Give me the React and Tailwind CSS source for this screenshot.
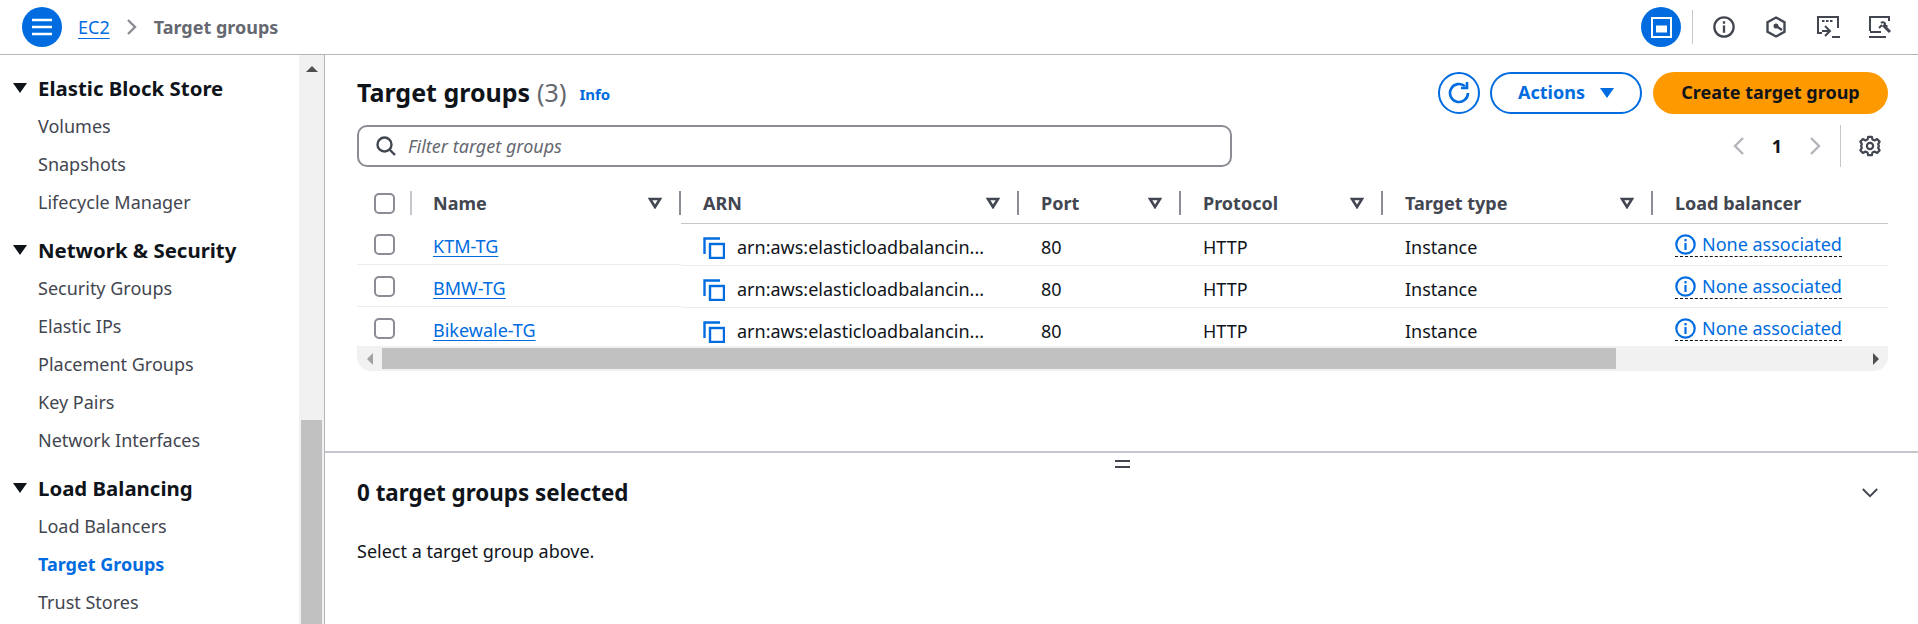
import React from 'react';

function Hamburger() {
  return (
    <svg viewBox="0 0 20 20" className="w-5 h-5" fill="none" stroke="white" strokeWidth="2.4">
      <path d="M0 3h20M0 10h20M0 17h20" />
    </svg>
  );
}

function Sep({ className = 'bg-[#8c8c94]' }) {
  return <div className={`w-[2px] h-[24px] shrink-0 ${className}`}></div>;
}

function SortIcon() {
  return (
    <svg viewBox="0 0 14 12" className="w-[14px] h-[12px] shrink-0" fill="none" stroke="#424650" strokeWidth="2.6">
      <path d="M2 2h10L7 10z" />
    </svg>
  );
}

function InfoIcon({ color, size = 'w-[21px] h-[21px]' }) {
  return (
    <svg viewBox="0 0 21 21" className={`${size} shrink-0`} fill="none" stroke={color} strokeWidth="2.2">
      <circle cx="10.5" cy="10.5" r="9.2" />
      <path d="M10.5 9v7" />
      <path d="M10.5 5v2.4" />
    </svg>
  );
}

function CopyIcon() {
  return (
    <svg viewBox="0 0 22 22" className="w-[22px] h-[22px] shrink-0" fill="none" stroke="#006ce0" strokeWidth="2.4">
      <path d="M1.5 17V1.5H17" />
      <rect x="7" y="7" width="14" height="14" />
    </svg>
  );
}

function Checkbox({ className = '' }) {
  return <div className={`w-[21px] h-[21px] rounded-[5px] border-[2px] border-[#8c8c94] bg-white shrink-0 ${className}`}></div>;
}

function NavGroup({ title, items, active }) {
  return (
    <div className="mb-[10px]">
      <div className="flex items-center h-[38px]">
        <svg viewBox="0 0 14 12" className="w-[14px] h-[12px] ml-[13px] mr-[11px]" fill="#0f141a">
          <path d="M0 1h14L7 11z" />
        </svg>
        <span className="text-[20.4px] font-bold text-[#0f141a]">{title}</span>
      </div>
      {items.map((item) => (
        <div
          key={item}
          className={`h-[38px] flex items-center pl-[38px] text-[18px] ${item === active ? 'font-bold text-[#006ce0]' : 'text-[#424650]'}`}
        >
          {item}
        </div>
      ))}
    </div>
  );
}

function Sidebar() {
  return (
    <div className="w-[325px] shrink-0 flex border-r border-[#b4b4bb] overflow-hidden">
      <div className="flex-1 pt-[14px] overflow-hidden">
        <NavGroup title="Elastic Block Store" items={['Volumes', 'Snapshots', 'Lifecycle Manager']} />
        <NavGroup title="Network & Security" items={['Security Groups', 'Elastic IPs', 'Placement Groups', 'Key Pairs', 'Network Interfaces']} />
        <NavGroup title="Load Balancing" items={['Load Balancers', 'Target Groups', 'Trust Stores']} active="Target Groups" />
      </div>
      <div className="w-[25px] bg-[#f1f1f1] flex flex-col items-center">
        <svg viewBox="0 0 12 6" className="w-[12px] h-[6px] mt-[11px]" fill="#505050">
          <path d="M6 0l6 6H0z" />
        </svg>
        <div className="flex-1"></div>
        <div className="w-[21px] h-[204px] bg-[#c1c1c1]"></div>
      </div>
    </div>
  );
}

const rows = ['KTM-TG', 'BMW-TG', 'Bikewale-TG'];

function HeadCell({ label, width, sort = true }) {
  return (
    <div className={`flex items-center h-[34px] shrink-0 ${width}`}>
      <span className="pl-[22px] text-[18px] font-bold text-[#424650]">{label}</span>
      <div className="flex-1"></div>
      {sort && <SortIcon />}
      {sort && <div className="w-[17px]"></div>}
      {sort && <Sep />}
    </div>
  );
}

function TargetTable() {
  return (
    <div className="w-[1531px] overflow-hidden">
      <div className="flex h-[37px] pb-[3px]">
        <div className="w-[324px] shrink-0 flex items-center">
          <div className="w-[17px]"></div>
          <Checkbox />
          <div className="w-[15px]"></div>
          <Sep className="bg-[#c6c6cd]" />
          <span className="pl-[21px] text-[18px] font-bold text-[#424650] flex-1">Name</span>
          <SortIcon />
          <div className="w-[17px]"></div>
          <Sep />
        </div>
        <HeadCell label="ARN" width="w-[338px]" />
        <HeadCell label="Port" width="w-[162px]" />
        <HeadCell label="Protocol" width="w-[202px]" />
        <HeadCell label="Target type" width="w-[270px]" />
        <HeadCell label="Load balancer" width="flex-1" sort={false} />
      </div>
      {/* third row is cut by the horizontal scrollbar */}
      <div className="h-[123px] overflow-hidden">
        {rows.map((name, i) => (
          <div key={name} className="flex h-[42px]">
            <div className="w-[324px] shrink-0 flex items-center border-b-[1px] border-[#ebebf0]">
              <div className="w-[17px]"></div>
              <Checkbox className="mt-[2px]" />
              <div className="w-[38px]"></div>
              <span className="mt-[5px] text-[18px] leading-[22px] text-[#006ce0] underline underline-offset-[3px] decoration-1">{name}</span>
            </div>
            <div className={`flex-1 flex items-center pt-[6px] border-t-[1px] ${i === 0 ? 'border-[#c6c6cd]' : 'border-[#ebebf0]'}`}>
              <div className="w-[338px] shrink-0 flex items-center pl-[22px] text-[18px] text-[#0f141a]">
                <CopyIcon />
                <span className="ml-[12px] whitespace-nowrap">arn:aws:elasticloadbalancin...</span>
              </div>
              <div className="w-[162px] shrink-0 pl-[22px] text-[18px] text-[#0f141a]">80</div>
              <div className="w-[202px] shrink-0 pl-[22px] text-[18px] text-[#0f141a]">HTTP</div>
              <div className="w-[270px] shrink-0 pl-[22px] text-[18px] text-[#0f141a]">Instance</div>
              <div className="flex-1 pl-[22px]">
                <span className="inline-flex items-center gap-[6px] -mt-[2px] text-[18px] leading-[24px] text-[#006ce0] border-b-[1px] border-dashed border-[#0f141a]">
                  <InfoIcon color="#006ce0" />
                  None associated
                </span>
              </div>
            </div>
          </div>
        ))}
      </div>
      <div className="h-[25px] bg-[#f1f1f1] rounded-b-[14px] flex items-center">
        <div className="w-[25px] flex justify-center">
          <svg viewBox="0 0 6 12" className="w-[6px] h-[12px]" fill="#a3a3a3">
            <path d="M0 6l6-6v12z" />
          </svg>
        </div>
        <div className="w-[1234px] h-[21px] bg-[#c1c1c1]"></div>
        <div className="flex-1"></div>
        <div className="w-[25px] flex justify-center">
          <svg viewBox="0 0 6 12" className="w-[6px] h-[12px]" fill="#505050">
            <path d="M6 6L0 0v12z" />
          </svg>
        </div>
      </div>
    </div>
  );
}

export default function App() {
  return (
    <div className="w-[1918px] h-[624px] overflow-hidden bg-white flex flex-col font-['Noto_Sans',sans-serif]">
      {/* Top bar */}
      <div className="h-[55px] shrink-0 border-b border-[#b4b4bb] flex items-center pl-[22px] pr-[26px]">
        <div className="w-10 h-10 rounded-full bg-[#006ce0] flex items-center justify-center">
          <Hamburger />
        </div>
        <span className="ml-[16px] text-[18px] text-[#006ce0] underline underline-offset-[4px] decoration-1">EC2</span>
        <svg viewBox="0 0 12 16" className="w-[12px] h-[16px] ml-[16px]" fill="none" stroke="#8c8c94" strokeWidth="2.4">
          <path d="M2 1l7 7-7 7" />
        </svg>
        <span className="ml-[16px] text-[18px] font-bold text-[#656871]">Target groups</span>
        <div className="flex-1"></div>
        <div className="w-10 h-10 rounded-full bg-[#006ce0] flex items-center justify-center">
          <svg viewBox="0 0 21 21" className="w-[21px] h-[21px]" fill="none" stroke="white" strokeWidth="2">
            <rect x="1" y="1" width="19" height="19" />
            <rect x="5" y="8.5" width="11" height="7" fill="white" stroke="none" />
          </svg>
        </div>
        <div className="w-[1px] h-[34px] bg-[#c6c6cd] ml-[11px] mr-[20px]"></div>
        <InfoIcon color="#424650" size="w-[22px] h-[22px]" />
        <svg viewBox="0 0 22 22" className="w-[22px] h-[22px] ml-[30px]" fill="none" stroke="#424650" strokeWidth="2.4">
          <path d="M11 1.500l8.500 4.700v9.600L11 20.500l-8.500-4.700V6.200z" />
          <circle cx="11" cy="10" r="2.500" fill="#424650" stroke="none" />
          <path d="M11 10l6 4" />
        </svg>
        <svg viewBox="0 0 24 24" className="w-[24px] h-[24px] ml-[29px]" fill="none" stroke="#424650" strokeWidth="2">
          <path d="M6 18H2V2h20v11" />
          <path d="M6 6h2.500M10 6h2.500M14 6h2.500" />
          <path d="M9 11l5 5-5 5M6 16h7" />
          <path d="M16 22h8" />
        </svg>
        <svg viewBox="0 0 24 24" className="w-[24px] h-[24px] ml-[28px]" fill="none" stroke="#424650" strokeWidth="2">
          <path d="M2 16V2h19v4" />
          <path d="M2 17h11" />
          <path d="M1 22h17" />
          <path d="M15 10l7 7" strokeWidth="3" />
          <path d="M11 13l3-3M13 8c1-1 3-1 4 .5v2.500h2.500" />
        </svg>
      </div>

      <div className="flex-1 flex min-h-0">
        <Sidebar />
        <div className="flex-1 flex flex-col min-w-0">
          {/* Table panel */}
          <div className="h-[398px] shrink-0 border-b-[2px] border-[#c6c6cd] pl-[32px]">
            <div className="flex items-center pt-[17px] h-[58px] pr-[30px]">
              <span className="text-[25px] font-bold text-[#0f141a]">Target groups</span>
              <span className="ml-[7px] text-[25px] text-[#656871]">(3)</span>
              <span className="ml-[13px] mt-[4px] text-[15px] font-bold text-[#006ce0]">Info</span>
              <div className="flex-1"></div>
              <div className="w-[42px] h-[42px] rounded-full border-[2px] border-[#006ce0] flex items-center justify-center">
                <svg viewBox="0 0 22 22" className="w-[22px] h-[22px]" fill="none" stroke="#006ce0" strokeWidth="2.6">
                  <path d="M20 11a9 9 0 1 1-3-6.700" />
                  <path d="M19 0v6h-6" />
                </svg>
              </div>
              <div className="ml-[10px] w-[152px] h-[42px] rounded-full border-[2px] border-[#006ce0] flex items-center justify-center gap-[15px]">
                <span className="text-[18px] font-bold text-[#006ce0]">Actions</span>
                <svg viewBox="0 0 14 12" className="w-[14px] h-[12px]" fill="#006ce0">
                  <path d="M0 1h14L7 11z" />
                </svg>
              </div>
              <div className="ml-[11px] w-[235px] h-[42px] rounded-full bg-[#ff9900] flex items-center justify-center text-[18px] font-bold text-[#0f141a]">
                Create target group
              </div>
            </div>
            <div className="flex items-center mt-[12px] h-[42px] pr-[37px]">
              <div className="w-[875px] h-[42px] rounded-[10px] border-[2px] border-[#8c8c94] flex items-center pl-[17px]">
                <svg viewBox="0 0 20 20" className="w-[20px] h-[20px]" fill="none" stroke="#424650" strokeWidth="2.4">
                  <circle cx="8.500" cy="8.500" r="7" />
                  <path d="M13.500 13.500L19 19" />
                </svg>
                <span className="ml-[12px] text-[18px] italic text-[#656871]">Filter target groups</span>
              </div>
              <div className="flex-1"></div>
              <svg viewBox="0 0 12 18" className="w-[12px] h-[18px]" fill="none" stroke="#b4b4bb" strokeWidth="2.4">
                <path d="M10 1L2 9l8 8" />
              </svg>
              <span className="ml-[27px] text-[18px] font-bold text-[#0f141a]">1</span>
              <svg viewBox="0 0 12 18" className="ml-[27px] w-[12px] h-[18px]" fill="none" stroke="#b4b4bb" strokeWidth="2.4">
                <path d="M2 1l8 8-8 8" />
              </svg>
              <div className="ml-[19px] w-[1px] h-[42px] bg-[#c6c6cd]"></div>
              <svg viewBox="0 0 24 24" className="ml-[18px] w-[22px] h-[22px]" fill="none" stroke="#424650" strokeWidth="2.4" strokeLinejoin="round">
                <circle cx="12" cy="12" r="3.400" />
                <path d="M10 2h4l.7 3 2.300 1 2.700-1.600 2.800 2.800L20.900 10l.8 2-.8 2 1.600 2.800-2.800 2.800-2.700-1.600-2.300 1-.7 3h-4l-.7-3-2.300-1-2.700 1.600-2.800-2.800L3.100 14l-.8-2 .8-2-1.600-2.800 2.800-2.800L7 6l2.300-1z" />
              </svg>
            </div>
            <div className="mt-[19px]">
              <TargetTable />
            </div>
          </div>
          {/* Split panel */}
          <div className="relative flex-1 pl-[32px] pr-[40px]">
            <div className="absolute left-[790px] top-[7px] w-[15px] h-[8px] border-y-[2px] border-[#424650]"></div>
            <div className="flex items-center justify-between pt-[22px] h-[58px]">
              <span className="text-[22.4px] font-bold text-[#0f141a]">0 target groups selected</span>
              <svg viewBox="0 0 20 12" className="w-[16px] h-[10px]" fill="none" stroke="#424650" strokeWidth="2.4">
                <path d="M1 1l9 9 9-9" />
              </svg>
            </div>
            <div className="mt-[27px] text-[18px] text-[#0f141a]">Select a target group above.</div>
          </div>
        </div>
      </div>
    </div>
  );
}
